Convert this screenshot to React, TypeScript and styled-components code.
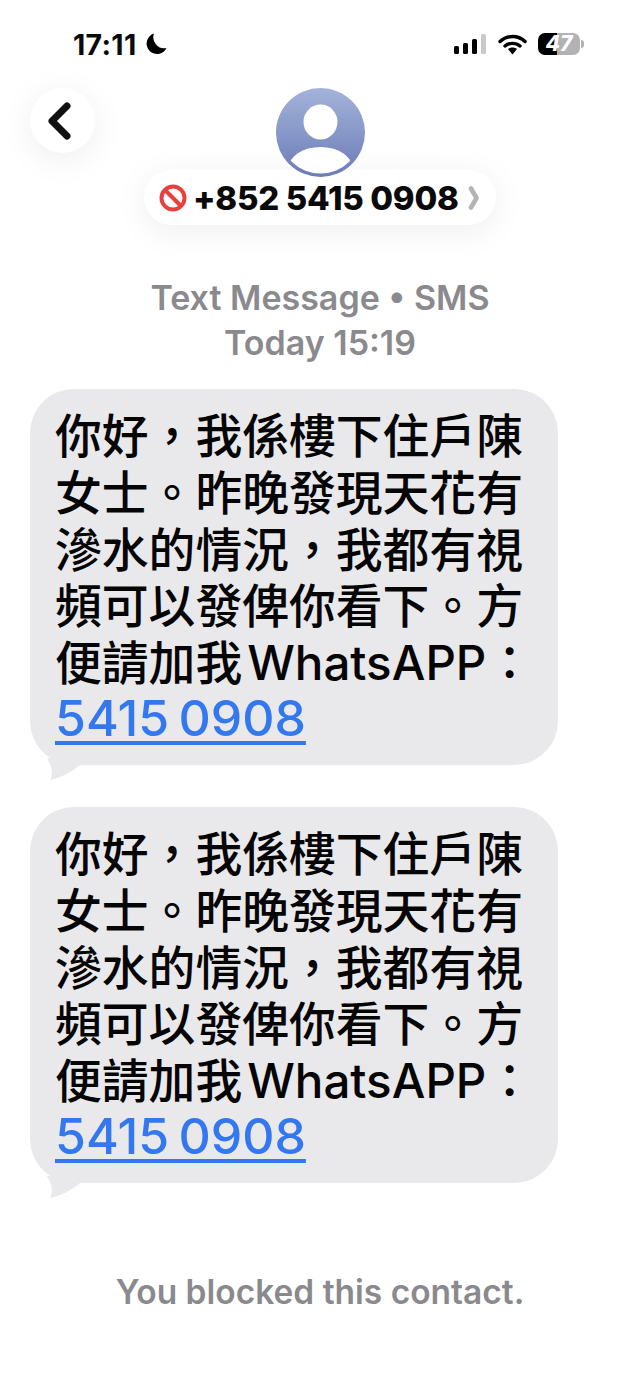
import React from 'react'
import styled, { createGlobalStyle } from 'styled-components'

const GlobalStyle = createGlobalStyle`
  html, body {
    margin: 0;
    padding: 0;
    background: #fff;
  }
  body {
    font-family: Inter, "Noto Sans CJK TC", sans-serif;
  }
`

const message = [
  '你好，我係樓下住戶陳',
  '女士。昨晚發現天花有',
  '滲水的情況，我都有視',
  '頻可以發俾你看下。方',
]

const Bubble: React.FC = () => (
  <BubbleWrap>
    {message.map((line) => (
      <BubbleLine key={line}>{line}</BubbleLine>
    ))}
    <BubbleLine>
      便請加我<Latin>WhatsAPP</Latin>：
    </BubbleLine>
    <PhoneLink>5415 0908</PhoneLink>
    <Tail viewBox="0 0 50 22">
      <path d="M17 0 C21 8 24 14 20 22 C30 20 42 14 50 7 L50 0 Z" fill="#e9e9eb" />
    </Tail>
  </BubbleWrap>
)

const App: React.FC = () => {
  return (
    <Page>
      <GlobalStyle />
      <StatusBar>
        <Clock>
          17:11
          <svg width="21" height="22" viewBox="0 0 21 22">
            <path d="M8 0.5 A10.5 10.5 0 1 0 20.6 15 A11 11 0 0 1 8 0.5 Z" fill="#000" />
          </svg>
        </Clock>
        <StatusIcons>
          <svg width="33" height="21" viewBox="0 0 33 21">
            <rect x="0" y="12" width="5" height="8" rx="1.5" fill="#000" />
            <rect x="9" y="9" width="5" height="11" rx="1.5" fill="#000" />
            <rect x="18" y="5" width="5" height="15" rx="1.5" fill="#000" />
            <rect x="27" y="0" width="5" height="20" rx="1.5" fill="#c9c9cb" />
          </svg>
          <svg width="29" height="21" viewBox="0 0 28 21">
            <path d="M1.5 7.5 C8.5 0.8 19.5 0.8 26.5 7.5" fill="none" stroke="#000" strokeWidth="3.4" strokeLinecap="round" />
            <path d="M6.5 12 C10.5 8.5 17.5 8.5 21.5 12" fill="none" stroke="#000" strokeWidth="3.4" strokeLinecap="round" />
            <path d="M9.5 15 L14 20.5 L18.5 15 C16 13 12 13 9.5 15 Z" fill="#000" />
          </svg>
          <Battery>
            <BatteryLevel>47</BatteryLevel>
            <BatteryCap />
          </Battery>
        </StatusIcons>
      </StatusBar>

      <Header>
        <BackButton>
          <svg width="26" height="38" viewBox="0 0 26 38">
            <path d="M21 4 L6 19 L21 34" fill="none" stroke="#111" strokeWidth="7" strokeLinecap="round" strokeLinejoin="round" />
          </svg>
        </BackButton>
        <Avatar>
          <svg width="89" height="89" viewBox="0 0 89 89">
            <defs>
              <linearGradient id="avatarFill" x1="0" y1="0" x2="0" y2="1">
                <stop offset="0" stopColor="#a3b3d9" />
                <stop offset="1" stopColor="#6c7cb8" />
              </linearGradient>
              <clipPath id="avatarClip">
                <circle cx="44.5" cy="44.5" r="41" />
              </clipPath>
            </defs>
            <circle cx="44.5" cy="44.5" r="44.5" fill="url(#avatarFill)" />
            <g clipPath="url(#avatarClip)">
              <ellipse cx="44.5" cy="34" rx="17" ry="17.5" fill="#fff" />
              <ellipse cx="44.5" cy="80" rx="32" ry="21" fill="#fff" />
            </g>
          </svg>
        </Avatar>
        <ContactPill>
          <svg width="28" height="28" viewBox="0 0 28 28">
            <circle cx="14" cy="14" r="11.5" fill="#fff" stroke="#e8403f" strokeWidth="4" />
            <path d="M6 6 L22 22" stroke="#e8403f" strokeWidth="4" />
          </svg>
          <ContactNumber>+852 5415 0908</ContactNumber>
          <PillChevron viewBox="0 0 12 24">
            <path d="M3 2.5 L8.5 12 L3 21.5" fill="none" stroke="#b4b4b6" strokeWidth="4.6" strokeLinecap="round" strokeLinejoin="round" />
          </PillChevron>
        </ContactPill>
      </Header>

      <Meta>
        <MetaLine>Text Message • SMS</MetaLine>
        <MetaLine>Today 15:19</MetaLine>
      </Meta>

      <Thread>
        <Bubble />
        <Bubble />
      </Thread>

      <BlockedNote>You blocked this contact.</BlockedNote>
    </Page>
  )
}

export default App

const Page = styled.div`
  width: 640px;
  height: 1387px;
  overflow: hidden;
  background: #fff;
  display: flex;
  flex-direction: column;
`

const StatusBar = styled.div`
  height: 34px;
  margin-top: 27px;
  padding: 0 56px 0 73px;
  display: flex;
  align-items: center;
  justify-content: space-between;
`

const Clock = styled.div`
  display: flex;
  align-items: center;
  gap: 9px;
  font-size: 28.5px;
  font-weight: 700;
  letter-spacing: 0.3px;
  color: #0a0a0a;
`

const StatusIcons = styled.div`
  display: flex;
  align-items: center;
  gap: 11px;
`

const Battery = styled.div`
  display: flex;
  align-items: center;
  gap: 1px;
`

const BatteryLevel = styled.div`
  width: 42px;
  height: 22px;
  border-radius: 7px;
  background: linear-gradient(90deg, #000 0 45%, #b2b2b4 45% 100%);
  color: #fff;
  font-size: 21px;
  font-weight: 800;
  font-style: italic;
  line-height: 22px;
  text-align: center;
`

const BatteryCap = styled.div`
  width: 3px;
  height: 8px;
  border-radius: 0 3px 3px 0;
  background: #b2b2b4;
`

const Header = styled.div`
  position: relative;
  margin-top: 27px;
  display: flex;
  flex-direction: column;
  align-items: center;
`

const BackButton = styled.div`
  position: absolute;
  left: 30px;
  top: 0;
  width: 65px;
  height: 65px;
  padding-right: 7px;
  box-sizing: border-box;
  border-radius: 50%;
  background: #fff;
  box-shadow: 0 6px 34px rgba(0, 0, 0, 0.07);
  display: flex;
  align-items: center;
  justify-content: center;
`

const Avatar = styled.div`
  position: relative;
  z-index: 1;
  width: 89px;
  height: 89px;
  line-height: 0;
`

const ContactPill = styled.div`
  margin-top: -7px;
  width: 352px;
  height: 55px;
  box-sizing: border-box;
  padding: 0 15px;
  border-radius: 28px;
  background: #fff;
  box-shadow: 0 6px 34px rgba(0, 0, 0, 0.07);
  display: flex;
  align-items: center;
  gap: 6px;
`

const ContactNumber = styled.span`
  font-size: 33px;
  font-weight: 800;
  letter-spacing: -0.3px;
  white-space: nowrap;
  color: #0a0a0a;
`

const PillChevron = styled.svg`
  width: 12px;
  height: 24px;
  margin-left: auto;
  margin-right: 1px;
`

const Meta = styled.div`
  margin-top: 50px;
  display: flex;
  flex-direction: column;
  align-items: center;
`

const MetaLine = styled.div`
  height: 45px;
  line-height: 45px;
  font-size: 34px;
  font-weight: 600;
  color: #8a8a8e;
`

const Thread = styled.div`
  margin-top: 24px;
  padding-left: 30px;
  display: flex;
  flex-direction: column;
  gap: 42px;
`

const BubbleWrap = styled.div`
  position: relative;
  width: 528px;
  height: 376px;
  box-sizing: border-box;
  padding: 16px 0 0 25px;
  border-radius: 44px;
  background: #e9e9eb;
`

const BubbleLine = styled.div`
  height: 56.8px;
  line-height: 56.8px;
  font-family: "Noto Sans CJK TC", sans-serif;
  font-size: 46.8px;
  font-weight: 500;
  white-space: nowrap;
  color: #050505;
`

const Latin = styled.span`
  margin-left: 5px;
  font-family: Inter, sans-serif;
  font-size: 47.5px;
  font-weight: 500;
`

const PhoneLink = styled.a`
  display: block;
  width: fit-content;
  height: 57px;
  margin-top: 1px;
  line-height: 57px;
  font-size: 50px;
  font-weight: 500;
  word-spacing: -4px;
  color: #3478f0;
  text-decoration: underline;
  text-decoration-thickness: 4px;
  text-underline-offset: 5px;
`

const Tail = styled.svg`
  position: absolute;
  left: 0;
  bottom: -15px;
  width: 50px;
  height: 22px;
  overflow: visible;
`

const BlockedNote = styled.div`
  margin-top: 89px;
  text-align: center;
  font-size: 33.5px;
  font-weight: 600;
  color: #8a8a8e;
`
